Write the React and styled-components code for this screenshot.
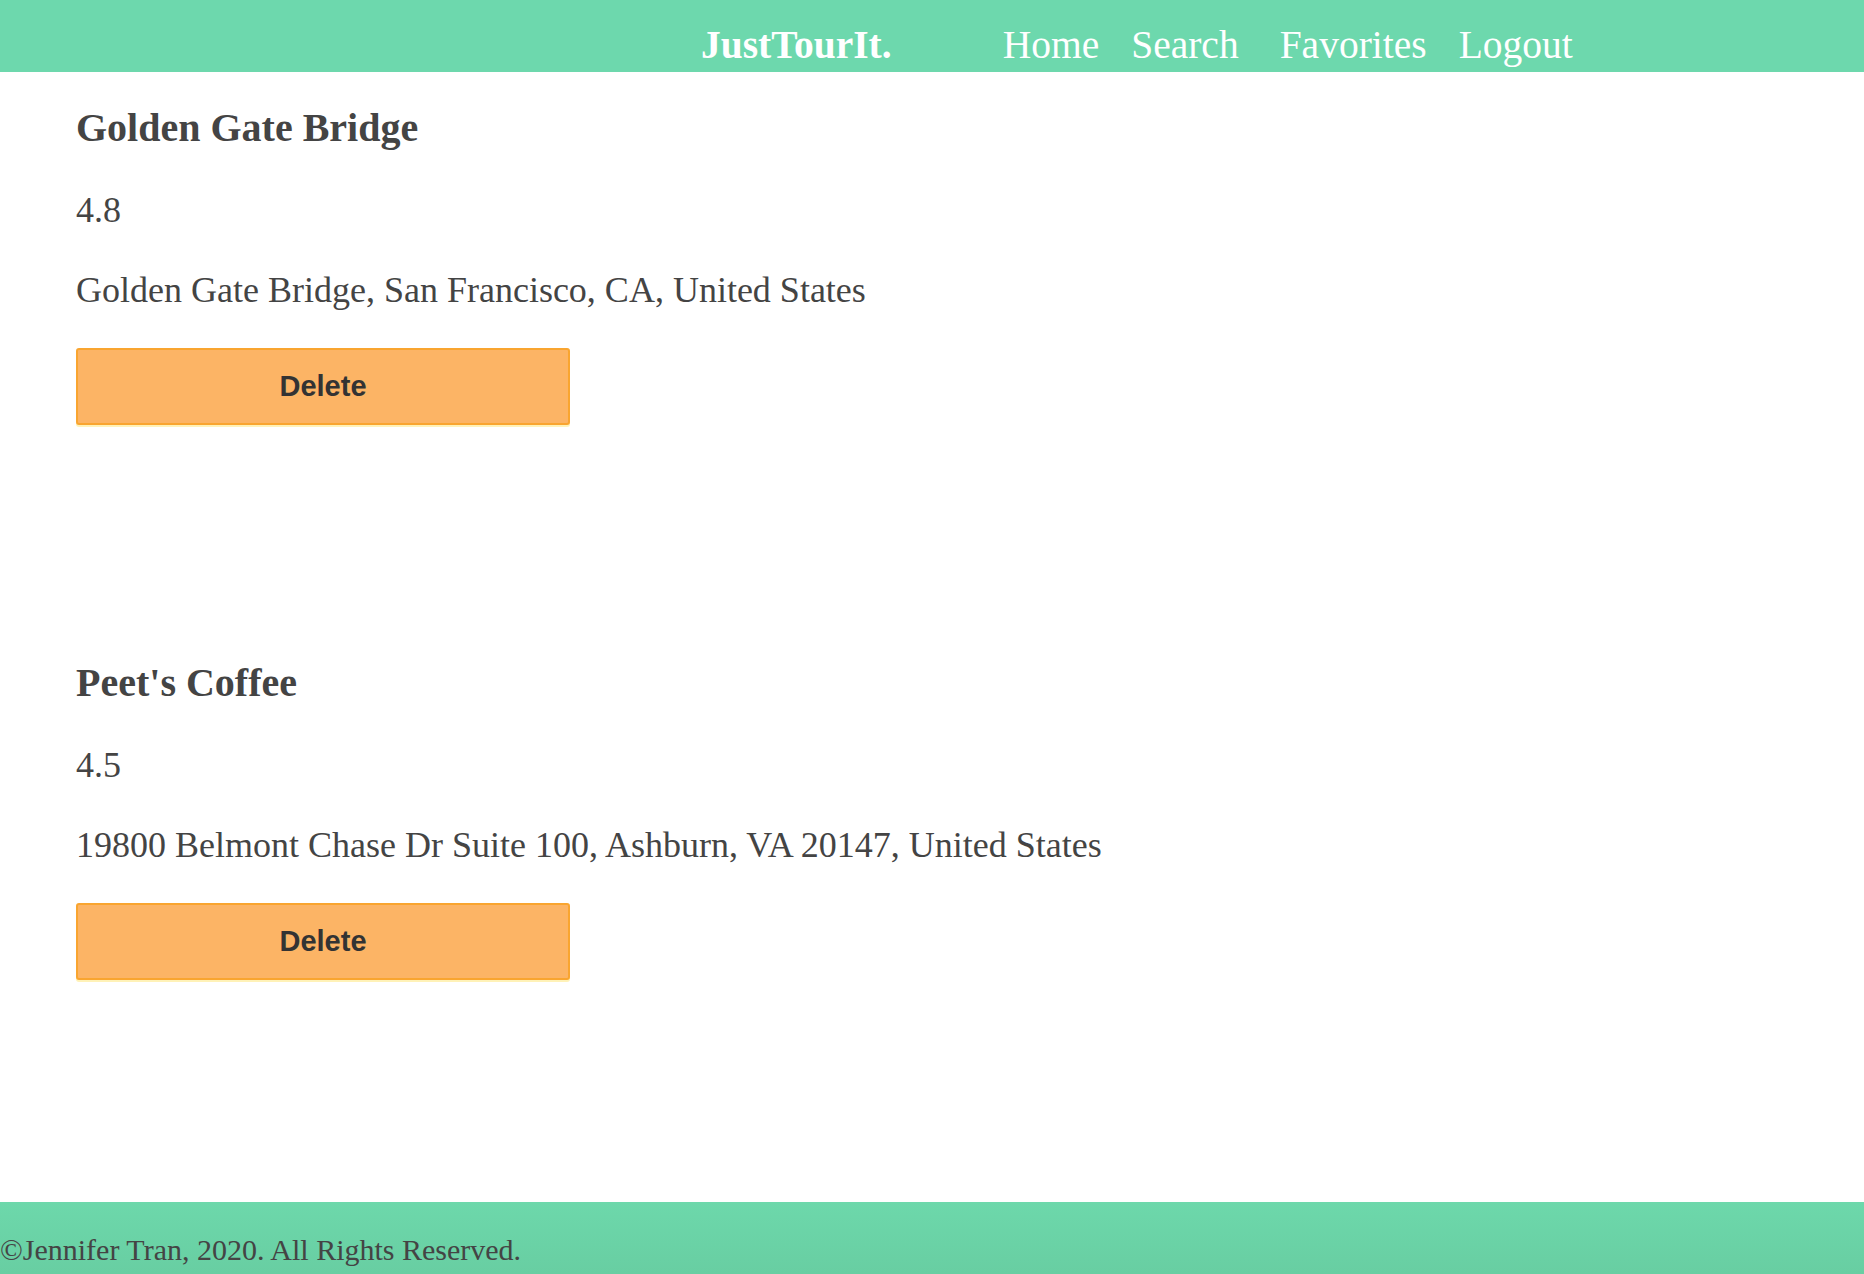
import React from 'react';
import styled, { createGlobalStyle } from 'styled-components';

const GlobalStyle = createGlobalStyle`
  html, body {
    margin: 0;
    padding: 0;
    background: #ffffff;
  }
  body {
    font-family: 'Liberation Serif', 'Times New Roman', serif;
    color: #444444;
  }
`;

const favorites = [
  {
    id: 1,
    name: 'Golden Gate Bridge',
    rating: 4.8,
    address: 'Golden Gate Bridge, San Francisco, CA, United States',
  },
  {
    id: 2,
    name: "Peet's Coffee",
    rating: 4.5,
    address: '19800 Belmont Chase Dr Suite 100, Ashburn, VA 20147, United States',
  },
];

const links = [
  { label: 'Home', gap: 111 },
  { label: 'Search', gap: 32 },
  { label: 'Favorites', gap: 41 },
  { label: 'Logout', gap: 32 },
];

const Page = styled.div`
  min-height: 100vh;
  display: flex;
  flex-direction: column;
`;

const Header = styled.header`
  height: 72px;
  box-sizing: border-box;
  padding: 26px 0 0 701px;
  background: #6dd8ad;
  display: flex;
  align-items: flex-start;
  font-size: 39.5px;
  line-height: 1;
  color: #ffffff;
`;

const Logo = styled.span`
  font-weight: bold;
  white-space: nowrap;
`;

const NavLink = styled.a`
  margin-left: ${(p) => p.$gap}px;
  color: #ffffff;
  text-decoration: none;
  white-space: nowrap;
  cursor: pointer;
`;

const Main = styled.main`
  display: flex;
  flex-direction: column;
  gap: 238px;
  padding: 36px 0 0 76px;
`;

const Card = styled.section`
  display: flex;
  flex-direction: column;
  align-items: flex-start;
`;

const Title = styled.h2`
  margin: 0;
  font-size: 40px;
  font-weight: bold;
  line-height: 1;
  color: #444444;
`;

const Text = styled.p`
  margin: 44px 0 0;
  font-size: 36px;
  line-height: 1;
  color: #444444;
`;

const DeleteButton = styled.button`
  margin-top: 40px;
  width: 494px;
  height: 77px;
  box-sizing: border-box;
  background: #fcb465;
  border: 2px solid #f9a530;
  border-radius: 3px;
  box-shadow: 0 2px 0 #fff2b8;
  font-family: 'Liberation Sans', Arial, sans-serif;
  font-size: 29px;
  font-weight: bold;
  color: #333333;
  cursor: pointer;
`;

const Footer = styled.footer`
  margin-top: auto;
  height: 72px;
  box-sizing: border-box;
  padding-top: 33px;
  background: linear-gradient(#6dd8ab, #68cea2);
  font-size: 30px;
  line-height: 1;
  color: #444444;
  white-space: nowrap;
`;

export default function App() {
  return (
    <Page>
      <GlobalStyle />
      <Header>
        <Logo>JustTourIt.</Logo>
        {links.map((l) => (
          <NavLink key={l.label} $gap={l.gap}>
            {l.label}
          </NavLink>
        ))}
      </Header>
      <Main>
        {favorites.map((f) => (
          <Card key={f.id}>
            <Title>{f.name}</Title>
            <Text>{f.rating}</Text>
            <Text>{f.address}</Text>
            <DeleteButton>Delete</DeleteButton>
          </Card>
        ))}
      </Main>
      <Footer>©Jennifer Tran, 2020. All Rights Reserved.</Footer>
    </Page>
  );
}
